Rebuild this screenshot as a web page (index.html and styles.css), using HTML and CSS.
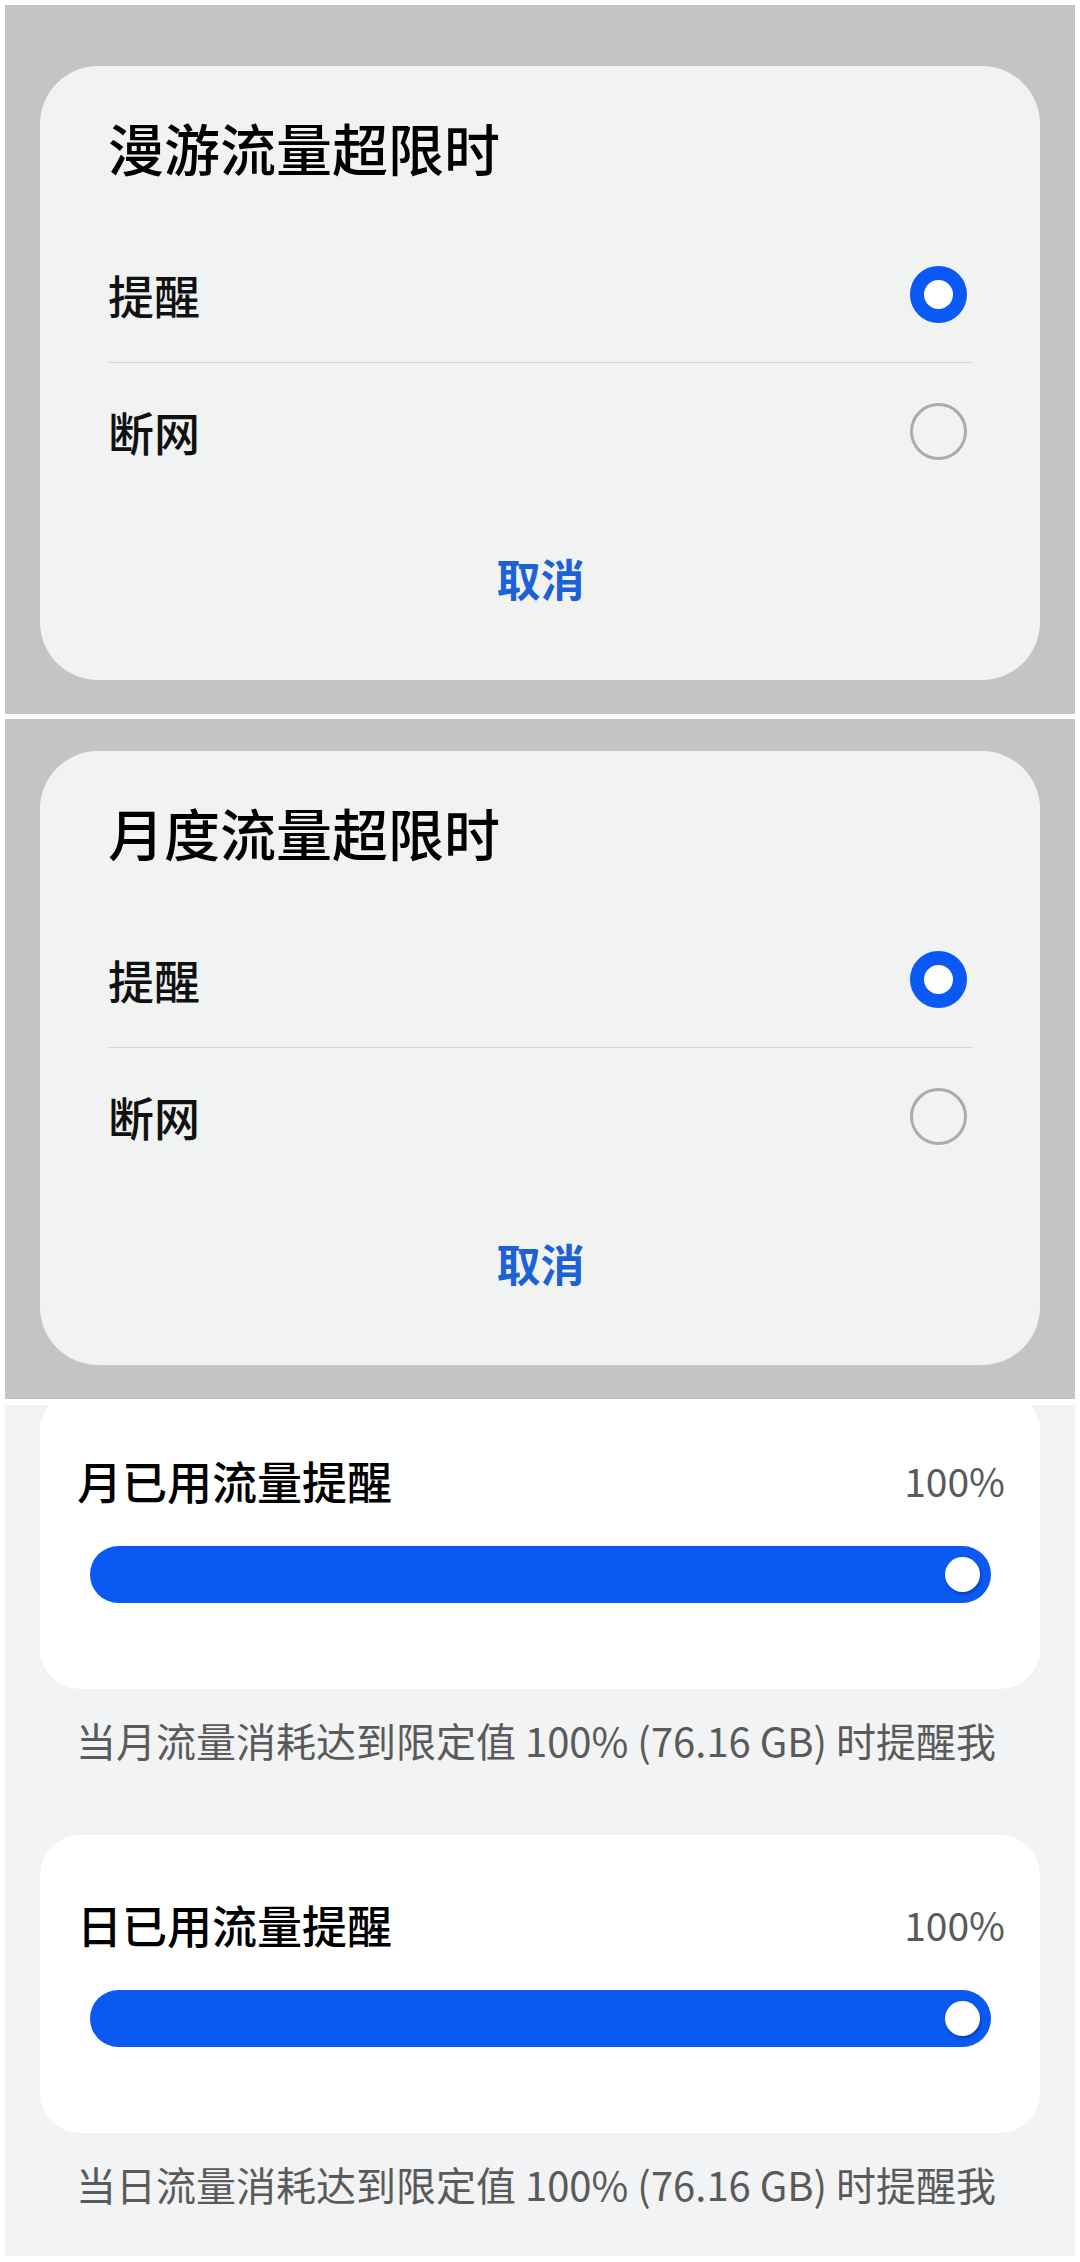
FILE: index.html
```html
<!DOCTYPE html>
<html>
<head>
    <title>流量超限设置</title>
    <link rel="stylesheet" href="styles.css">
</head>
<body>
    <div class="page">
        <div class="backdrop first">
            <div class="dialog">
                <h2>漫游流量超限时</h2>
                <div class="option">
                    <span>提醒</span>
                    <span class="radio checked"></span>
                </div>
                <div class="option">
                    <span>断网</span>
                    <span class="radio"></span>
                </div>
                <div class="cancel">取消</div>
            </div>
        </div>

        <div class="backdrop second">
            <div class="dialog">
                <h2>月度流量超限时</h2>
                <div class="option">
                    <span>提醒</span>
                    <span class="radio checked"></span>
                </div>
                <div class="option">
                    <span>断网</span>
                    <span class="radio"></span>
                </div>
                <div class="cancel">取消</div>
            </div>
        </div>

        <div class="settings">
            <div class="card clipped">
                <div class="card-head">
                    <span class="card-title">月已用流量提醒</span>
                    <span class="card-value">100%</span>
                </div>
                <div class="slider"><div class="thumb"></div></div>
            </div>
            <p class="hint">当月流量消耗达到限定值 100% (76.16 GB) 时提醒我</p>

            <div class="card">
                <div class="card-head">
                    <span class="card-title">日已用流量提醒</span>
                    <span class="card-value">100%</span>
                </div>
                <div class="slider"><div class="thumb"></div></div>
            </div>
            <p class="hint">当日流量消耗达到限定值 100% (76.16 GB) 时提醒我</p>
        </div>
    </div>
</body>
</html>
```

FILE: styles.css
```css
body {
    margin: 0;
    background-color: #ffffff;
    font-family: "Noto Sans CJK SC", "Noto Sans", sans-serif;
    color: #111111;
}

.page {
    padding: 5px;
    display: flex;
    flex-direction: column;
    gap: 5px;
}

.backdrop {
    background-color: #c2c4c5;
    padding: 32px 35px 34px 35px;
}

.backdrop.first {
    padding-top: 61px;
}

.dialog {
    background-color: #f1f3f3;
    border-radius: 58px;
    height: 614px;
    box-sizing: border-box;
    padding: 43px 67px 0 68px;
    display: flex;
    flex-direction: column;
}

.dialog h2 {
    margin: 0 0 41px 0;
    font-size: 56px;
    line-height: 76px;
    font-weight: 500;
    color: #000000;
}

.option {
    height: 136px;
    display: flex;
    align-items: center;
    justify-content: space-between;
    padding-right: 6px;
    font-size: 46px;
    font-weight: 500;
    color: #111111;
}

.option + .option {
    border-top: 1px solid #d3d5d6;
}

.radio {
    width: 57px;
    height: 57px;
    box-sizing: border-box;
    border-radius: 50%;
    border: 3px solid #a9abac;
}

.radio.checked {
    border: 14px solid #0a59f7;
    background-color: #ffffff;
}

.cancel {
    margin-top: 29px;
    height: 100px;
    display: flex;
    align-items: center;
    justify-content: center;
    font-size: 44px;
    font-weight: 700;
    color: #1c62d6;
}

.settings {
    background-color: #f1f3f5;
    padding: 0 35px 46px 35px;
    margin-top: 1px;
    overflow: hidden;
}

.card {
    background-color: #ffffff;
    border-radius: 40px;
    height: 298px;
    box-sizing: border-box;
    padding: 59px 35px 0 37px;
}

.card.clipped {
    margin-top: -14px;
}

.card-head {
    display: flex;
    justify-content: space-between;
    align-items: center;
    height: 60px;
}

.card-title {
    font-size: 45px;
    font-weight: 500;
    color: #000000;
}

.card-value {
    font-size: 39px;
    color: #5a5a5a;
}

.slider {
    margin: 36px 14px 0 13px;
    height: 57px;
    border-radius: 29px;
    background-color: #0a59f2;
    display: flex;
    align-items: center;
    justify-content: flex-end;
    padding-right: 11px;
}

.thumb {
    width: 35px;
    height: 35px;
    border-radius: 50%;
    background-color: #ffffff;
    box-shadow: 1px 2px 3px rgba(0, 0, 0, 0.3);
}

.hint {
    margin: 25px 0 69px 36px;
    font-size: 40px;
    line-height: 52px;
    color: #5a5a5a;
    white-space: nowrap;
}

.hint:last-child {
    margin-bottom: 0;
}
```
